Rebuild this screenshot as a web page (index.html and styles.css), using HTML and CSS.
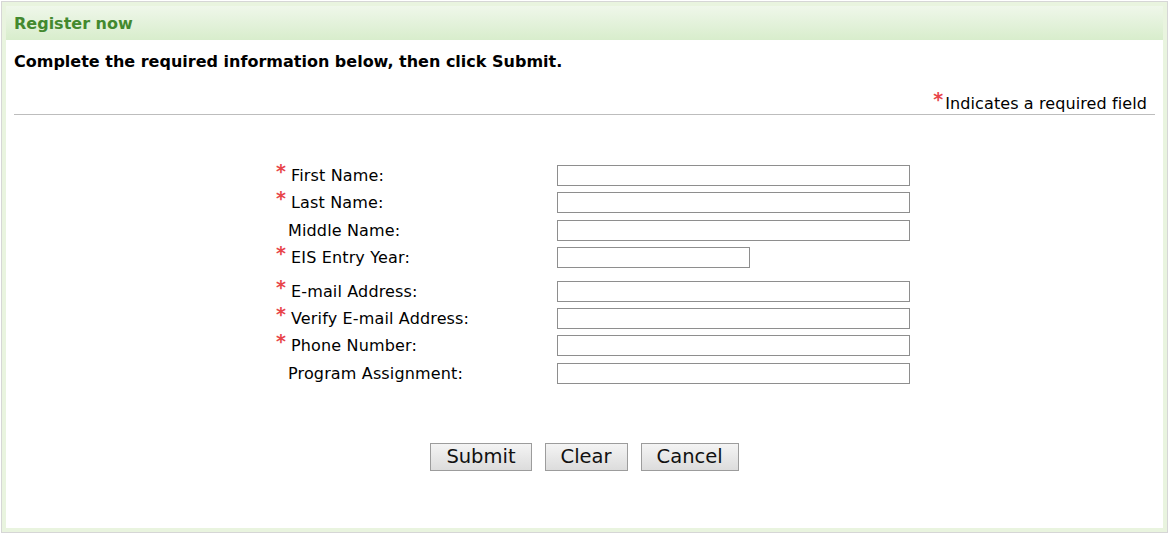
FILE: index.html
```html
<!DOCTYPE html>
<html>
<head>
<meta charset="utf-8">
<link rel="stylesheet" href="styles.css">
</head>
<body>
<div class="frame">
  <div class="inner">
    <div class="header">Register now</div>
    <div class="content">
      <p class="intro">Complete the required information below, then click Submit.</p>
      <div class="legend"><span class="star">*</span>Indicates a required field</div>
      <form class="form">
        <div class="fields">
          <label class="lbl req"><span class="star">*</span>First Name:</label>
          <span class="cell"><input class="inp" type="text"></span>
          <label class="lbl req"><span class="star">*</span>Last Name:</label>
          <span class="cell"><input class="inp" type="text"></span>
          <label class="lbl opt">Middle Name:</label>
          <span class="cell"><input class="inp" type="text"></span>
          <label class="lbl req"><span class="star">*</span>EIS Entry Year:</label>
          <span class="cell"><input class="inp short" type="text"></span>
          <label class="lbl req gap"><span class="star">*</span>E-mail Address:</label>
          <span class="cell gap"><input class="inp" type="text"></span>
          <label class="lbl req"><span class="star">*</span>Verify E-mail Address:</label>
          <span class="cell"><input class="inp" type="text"></span>
          <label class="lbl req"><span class="star">*</span>Phone Number:</label>
          <span class="cell"><input class="inp" type="text"></span>
          <label class="lbl opt">Program Assignment:</label>
          <span class="cell"><input class="inp" type="text"></span>
        </div>
        <div class="buttons">
          <button type="button" class="btn">Submit</button>
          <button type="button" class="btn">Clear</button>
          <button type="button" class="btn">Cancel</button>
        </div>
      </form>
    </div>
  </div>
</div>
</body>
</html>
```
FILE: styles.css
```css
html, body {
  margin: 0;
  padding: 0;
  background: #ffffff;
}
body {
  padding: 1px;
  font-family: "DejaVu Sans", Verdana, sans-serif;
  color: #000;
}
.frame {
  width: 1167px;
  height: 532px;
  box-sizing: border-box;
  border: 1px solid #d6d6d6;
}
.inner {
  height: 100%;
  box-sizing: border-box;
  border: 4px solid #e9f4df;
  background: #fff;
}
.header {
  height: 34px;
  box-sizing: border-box;
  padding: 8px 0 0 8px;
  background: linear-gradient(#eff7ea, #d8edcc);
  color: #43892f;
  font-weight: bold;
  font-size: 16px;
  line-height: 20px;
}
.content {
  padding: 0 8px;
}
.intro {
  margin: 0;
  padding-top: 12px;
  font-size: 16px;
  font-weight: bold;
  line-height: 20px;
}
.legend {
  margin-top: 22px;
  text-align: right;
  font-size: 16px;
  letter-spacing: 0.1px;
  line-height: 19px;
  padding-right: 8px;
  padding-bottom: 1px;
  border-bottom: 1px solid #bdbdbd;
}
.star {
  display: inline-block;
  width: 15px;
  text-align: left;
  color: #e8454a;
  font-weight: bold;
  font-size: 19px;
  line-height: 10px;
  position: relative;
  top: -3px;
}
.legend .star {
  width: 12px;
}
.form {
  padding-top: 50px;
}
.fields {
  display: grid;
  grid-template-columns: 281px 360px;
  row-gap: 6.4px;
  margin-left: 262px;
  align-items: end;
}
.lbl {
  font-size: 16px;
  letter-spacing: 0.15px;
  line-height: 21px;
  white-space: nowrap;
}
.lbl.opt {
  padding-left: 12px;
}
.gap {
  margin-top: 6px;
}
.cell {
  display: block;
  height: 21px;
}
.inp {
  display: block;
  width: 353px;
  height: 21px;
  box-sizing: border-box;
  border: 1px solid #8e8e8e;
  padding: 0 3px;
  margin: 0;
  font-size: 14px;
  background: #fff;
}
.inp.short {
  width: 193px;
}
.buttons {
  display: flex;
  justify-content: center;
  gap: 13px;
  margin-top: 59px;
}
.btn {
  height: 28px;
  padding: 0 15px;
  font-family: "DejaVu Sans", Verdana, sans-serif;
  font-size: 19.5px;
  line-height: 26px;
  color: #111;
  border: 1px solid #9c9c9c;
  background: linear-gradient(#f4f4f4, #dcdcdc);
  border-radius: 0;
  margin: 0;
}
```
